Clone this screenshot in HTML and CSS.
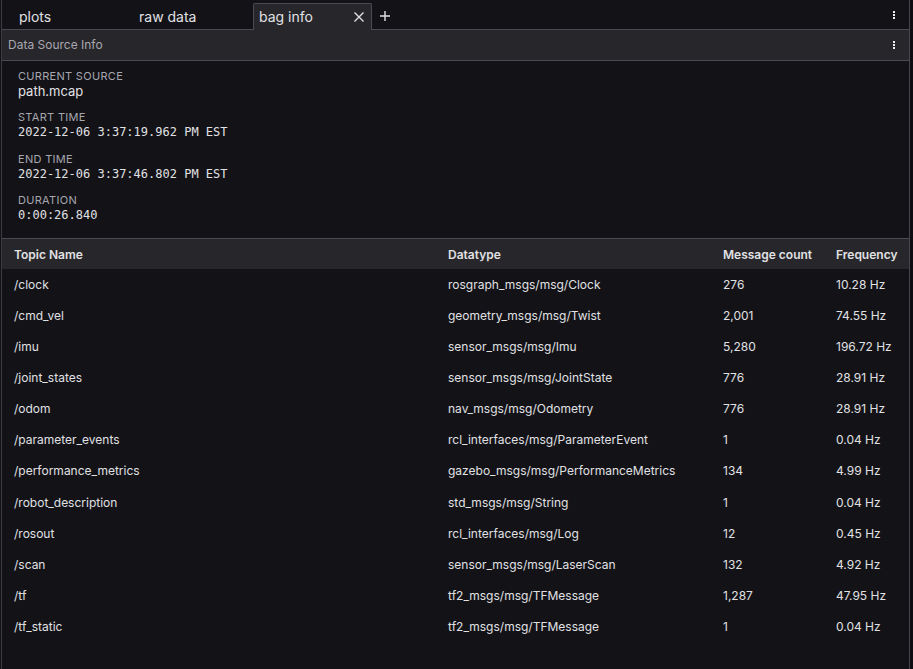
FILE: index.html
```html
<!DOCTYPE html>
<html>
<head>
<meta charset="utf-8">
<link rel="stylesheet" href="styles.css">
</head>
<body>
<div class="app">
  <div class="main">
    <div class="tabbar">
      <div class="tabs">
        <div class="tab">plots</div>
        <div class="tab">raw data</div>
        <div class="tab active"><span>bag info</span>
          <svg class="close" width="12" height="12" viewBox="0 0 12 12"><path d="M1.5 1.5 L10.5 10.5 M10.5 1.5 L1.5 10.5" stroke="#e1e1e4" stroke-width="1.4"/></svg>
        </div>
        <div class="add">
          <svg width="12" height="12" viewBox="0 0 12 12"><path d="M6 1 V11 M1 6 H11" stroke="#e1e1e4" stroke-width="1.4"/></svg>
        </div>
      </div>
      <div class="kebab"><i></i><i></i><i></i></div>
    </div>
    <div class="toolbar">
      <span class="title">Data Source Info</span>
      <div class="kebab"><i></i><i></i><i></i></div>
    </div>
    <div class="meta">
      <div class="item"><div class="label">Current source</div><div class="value sans">path.mcap</div></div>
      <div class="item"><div class="label">Start time</div><div class="value">2022-12-06 3:37:19.962 PM EST</div></div>
      <div class="item"><div class="label">End time</div><div class="value">2022-12-06 3:37:46.802 PM EST</div></div>
      <div class="item"><div class="label">Duration</div><div class="value">0:00:26.840</div></div>
    </div>
    <div class="table">
      <div class="row head"><div>Topic Name</div><div>Datatype</div><div>Message count</div><div>Frequency</div></div>
      <div class="row"><div>/clock</div><div>rosgraph_msgs/msg/Clock</div><div>276</div><div>10.28 Hz</div></div>
      <div class="row"><div>/cmd_vel</div><div>geometry_msgs/msg/Twist</div><div>2,001</div><div>74.55 Hz</div></div>
      <div class="row"><div>/imu</div><div>sensor_msgs/msg/Imu</div><div>5,280</div><div>196.72 Hz</div></div>
      <div class="row"><div>/joint_states</div><div>sensor_msgs/msg/JointState</div><div>776</div><div>28.91 Hz</div></div>
      <div class="row"><div>/odom</div><div>nav_msgs/msg/Odometry</div><div>776</div><div>28.91 Hz</div></div>
      <div class="row"><div>/parameter_events</div><div>rcl_interfaces/msg/ParameterEvent</div><div>1</div><div>0.04 Hz</div></div>
      <div class="row"><div>/performance_metrics</div><div>gazebo_msgs/msg/PerformanceMetrics</div><div>134</div><div>4.99 Hz</div></div>
      <div class="row"><div>/robot_description</div><div>std_msgs/msg/String</div><div>1</div><div>0.04 Hz</div></div>
      <div class="row"><div>/rosout</div><div>rcl_interfaces/msg/Log</div><div>12</div><div>0.45 Hz</div></div>
      <div class="row"><div>/scan</div><div>sensor_msgs/msg/LaserScan</div><div>132</div><div>4.92 Hz</div></div>
      <div class="row"><div>/tf</div><div>tf2_msgs/msg/TFMessage</div><div>1,287</div><div>47.95 Hz</div></div>
      <div class="row"><div>/tf_static</div><div>tf2_msgs/msg/TFMessage</div><div>1</div><div>0.04 Hz</div></div>
    </div>
  </div>
  <div class="side"></div>
</div>
</body>
</html>
```

FILE: styles.css
```css
* { box-sizing: border-box; }
html, body { margin: 0; padding: 0; background: #121217; }
body {
  font-family: Inter, "Noto Sans", sans-serif;
  color: #e1e1e4;
  width: 913px;
  height: 669px;
  overflow: hidden;
}
.app {
  display: flex;
  height: 669px;
  padding-left: 1px;
}
.main {
  width: 909px;
  border-left: 1px solid #3b3b42;
  border-right: 1px solid #46464e;
  display: flex;
  flex-direction: column;
  background: #121217;
}
.side {
  flex: 1;
  background: #0e0e12;
}
.tabbar {
  height: 30px;
  display: flex;
  justify-content: space-between;
  align-items: flex-end;
  border-bottom: 1px solid #4a4a52;
  padding-left: 11px;
}
.tabs {
  display: flex;
  align-items: flex-end;
  height: 100%;
}
.tab {
  width: 120px;
  height: 26px;
  padding: 0 6px 1px;
  font-size: 14px;
  line-height: 24px;
  color: #e1e1e4;
  display: flex;
  justify-content: space-between;
  align-items: center;
  margin-bottom: -1px;
}
.tab.active {
  width: 119px;
  background: #27272b;
  border: 1px solid #4a4a52;
  border-bottom: none;
  border-radius: 2px 2px 0 0;
  height: 27px;
  padding: 0 5px 1px 5px;
}
.tab.active .close { margin-right: 1px; }
.add {
  height: 26px;
  display: flex;
  align-items: center;
  padding-left: 7px;
  padding-bottom: 1px;
}
.kebab {
  display: flex;
  flex-direction: column;
  gap: 1px;
  width: 2px;
  margin-right: 14px;
  align-self: center;
}
.kebab i {
  display: block;
  width: 2px;
  height: 2px;
  background: #f0f0f2;
}
.toolbar {
  height: 31px;
  background: #27272b;
  border-bottom: 1px solid #4a4a52;
  display: flex;
  align-items: center;
  justify-content: space-between;
  padding-left: 6px;
  padding-bottom: 1px;
}
.title {
  font-size: 12px;
  color: #a7a6af;
}
.meta {
  padding: 8px 16px 15px;
  border-bottom: 1px solid #4a4a52;
  display: flex;
  flex-direction: column;
  gap: 11.4px;
}
.label {
  font-size: 11px;
  letter-spacing: 0.3px;
  text-transform: uppercase;
  color: #a7a6af;
  line-height: 14px;
}
.value {
  font-family: "DejaVu Sans Mono", "Liberation Mono", monospace;
  font-size: 12px;
  line-height: 16px;
  color: #e1e1e4;
}
.value.sans {
  font-family: Inter, "Noto Sans", sans-serif;
  font-size: 13px;
}
.table { display: flex; flex-direction: column; }
.row {
  display: grid;
  grid-template-columns: 434px 275px 113px 1fr;
  padding-left: 12px;
  height: 31.05px;
  align-items: center;
  font-size: 12px;
  color: #e1e1e4;
}
.row.head {
  height: 30px;
  background: #27272b;
  font-weight: 600;
}
```
